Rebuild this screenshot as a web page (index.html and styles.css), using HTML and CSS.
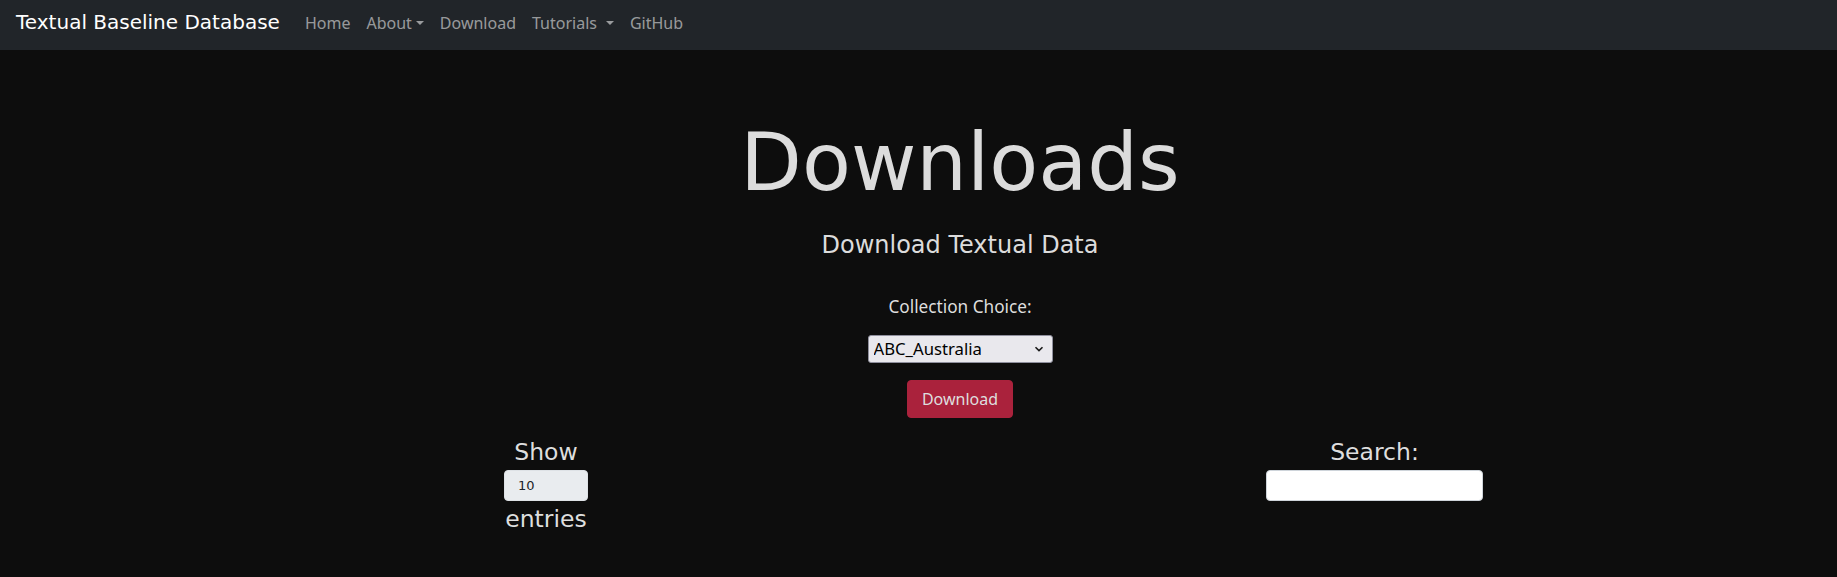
FILE: index.html
```html
<!DOCTYPE html>
<html lang="en">
<head>
<meta charset="utf-8">
<title>Downloads - Textual Baseline Database</title>
<link rel="stylesheet" href="styles.css">
</head>
<body>
<nav class="navbar">
  <a class="brand" href="#">Textual Baseline Database</a>
  <ul class="nav">
    <li><a class="nav-link" href="#">Home</a></li>
    <li><a class="nav-link dropdown" href="#">About</a></li>
    <li><a class="nav-link" href="#">Download</a></li>
    <li><a class="nav-link dropdown wide" href="#">Tutorials</a></li>
    <li><a class="nav-link" href="#">GitHub</a></li>
  </ul>
</nav>
<main class="page">
  <h1 class="display">Downloads</h1>
  <p class="lead">Download Textual Data</p>
  <form class="choice">
    <label class="choice-label" for="collection">Collection Choice:</label>
    <span class="select-wrap">
      <select id="collection" class="collection-select">
        <option>ABC_Australia</option>
      </select>
      <svg class="chev" width="10" height="6" viewBox="0 0 10 6"><path d="M1.5 1.2 L5 4.6 L8.5 1.2" fill="none" stroke="#1a1a1a" stroke-width="1.6"/></svg>
    </span>
    <button type="button" class="btn-download">Download</button>
  </form>
  <div class="dt-outer">
    <div class="dt-row">
      <label class="dt-length">Show
        <select class="len-select"><option>10</option></select>
        entries</label>
      <label class="dt-filter">Search:
        <input type="search" class="search-input">
      </label>
    </div>
  </div>
</main>
</body>
</html>
```
FILE: styles.css
```css
* { box-sizing: border-box; }
html, body { margin: 0; padding: 0; }
body {
  background: #0d0d0d;
  color: #dedede;
  font-family: "DejaVu Sans", sans-serif;
  min-height: 577px;
}
.navbar {
  display: flex;
  align-items: baseline;
  height: 50px;
  padding: 7px 16px 0;
  background: #212529;
}
.brand {
  font-family: "DejaVu Sans", sans-serif;
  font-size: 20px;
  line-height: 30px;
  color: #ffffff;
  text-decoration: none;
  margin-right: 17px;
}
.nav {
  display: flex;
  list-style: none;
  margin: 0;
  padding: 0;
}
.nav-link {
  display: block;
  padding: 0 8px;
  font-family: "Noto Sans", sans-serif;
  font-size: 16px;
  line-height: 24px;
  color: rgba(255, 255, 255, 0.55);
  text-decoration: none;
}
.dropdown::after {
  content: "";
  display: inline-block;
  margin-left: 4px;
  vertical-align: 4px;
  border-top: 4.8px solid;
  border-right: 4.8px solid transparent;
  border-left: 4.8px solid transparent;
}
.dropdown.wide::after { margin-left: 9px; }
.page {
  padding-left: 83px;
  text-align: center;
}
.display {
  margin: 65px 0 0;
  font-size: 80px;
  font-weight: 400;
  line-height: 1.2;
  color: #dcdcdc;
}
.lead {
  margin: 20px 0 0;
  font-size: 24px;
  line-height: 1.2;
  color: #dcdcdc;
}
.choice {
  display: flex;
  flex-direction: column;
  align-items: center;
  margin-top: 35px;
  font-family: "Noto Sans", sans-serif;
}
.choice-label {
  font-size: 17.2px;
  line-height: 24px;
  color: #dedede;
}
.select-wrap {
  position: relative;
  display: block;
  margin-top: 16px;
}
.collection-select {
  -webkit-appearance: none;
  appearance: none;
  display: block;
  width: 185px;
  height: 28px;
  padding: 0 20px 0 5px;
  font-family: "Noto Sans", sans-serif;
  font-size: 16.7px;
  color: #000;
  background: #e9e8ed;
  border: 1px solid #8f8f9d;
  border-radius: 3px;
  text-align: left;
}
.chev {
  position: absolute;
  right: 9px;
  top: 11px;
  pointer-events: none;
}
.btn-download {
  margin-top: 17px;
  width: 106px;
  height: 38px;
  padding: 6px 12px;
  font-family: "Noto Sans", sans-serif;
  font-size: 16px;
  line-height: 24px;
  color: #dedede;
  background: #aa223c;
  border: 1px solid #aa223c;
  border-radius: 4px;
}
.dt-outer {
  display: flex;
  justify-content: center;
  margin-top: 20px;
}
.dt-row {
  width: 1046px;
  padding-left: 67px;
  display: flex;
  justify-content: space-between;
}
.dt-length, .dt-filter {
  display: flex;
  flex-direction: column;
  align-items: center;
  gap: 4px;
  font-size: 23.5px;
  line-height: 1.2;
  color: #dedede;
}
.dt-length { width: 84px; }
.dt-filter { width: 217px; }
.len-select {
  -webkit-appearance: none;
  appearance: none;
  width: 84px;
  height: 31px;
  padding: 0 13px;
  font-family: "DejaVu Sans", sans-serif;
  font-size: 13px;
  color: #212529;
  background: #e9ecef;
  border: 1px solid #dee2e6;
  border-radius: 4px;
}
.search-input {
  width: 217px;
  height: 31px;
  background: #ffffff;
  border: 1px solid #ced4da;
  border-radius: 4px;
}
```
